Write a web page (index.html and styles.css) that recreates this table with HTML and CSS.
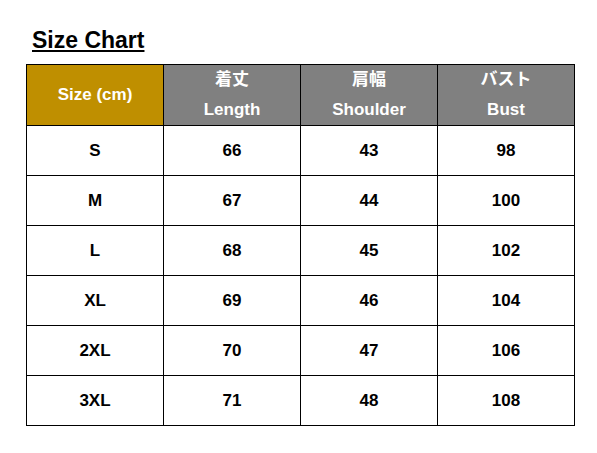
FILE: index.html
```html
<!DOCTYPE html>
<html lang="ja">
<head>
<meta charset="utf-8">
<link rel="stylesheet" href="styles.css">
</head>
<body>
<div class="page">
  <h1 class="title">Size Chart</h1>
  <table class="chart">
    <thead>
      <tr>
        <th class="corner">Size (cm)</th>
        <th class="head"><span>着丈</span><span>Length</span></th>
        <th class="head"><span>肩幅</span><span>Shoulder</span></th>
        <th class="head"><span>バスト</span><span>Bust</span></th>
      </tr>
    </thead>
    <tbody>
      <tr><td>S</td><td>66</td><td>43</td><td>98</td></tr>
      <tr><td>M</td><td>67</td><td>44</td><td>100</td></tr>
      <tr><td>L</td><td>68</td><td>45</td><td>102</td></tr>
      <tr><td>XL</td><td>69</td><td>46</td><td>104</td></tr>
      <tr><td>2XL</td><td>70</td><td>47</td><td>106</td></tr>
      <tr><td>3XL</td><td>71</td><td>48</td><td>108</td></tr>
    </tbody>
  </table>
</div>
</body>
</html>
```

FILE: styles.css
```css
html, body {
  margin: 0;
  padding: 0;
  background: #ffffff;
}
body {
  font-family: "Liberation Sans", "Noto Sans CJK JP", sans-serif;
  color: #000;
}
.page {
  padding: 26px 0 0 26px;
}
.title {
  margin: 0 0 10px 6px;
  font-size: 23px;
  line-height: 28px;
  font-weight: 700;
  text-decoration: underline;
  text-decoration-thickness: 2px;
  text-underline-offset: 2px;
}
.chart {
  border-collapse: collapse;
  table-layout: fixed;
  width: 549px;
}
.chart th, .chart td {
  border: 1px solid #000;
  text-align: center;
  vertical-align: middle;
  font-weight: 700;
  font-size: 17px;
  line-height: 20px;
  padding: 0;
}
.chart th {
  height: 59px;
  color: #fff;
}
.corner {
  background: #bf8f00;
}
.head {
  background: #808080;
}
.head span {
  display: block;
  line-height: 30px;
}
.chart td {
  height: 49px;
}
```
